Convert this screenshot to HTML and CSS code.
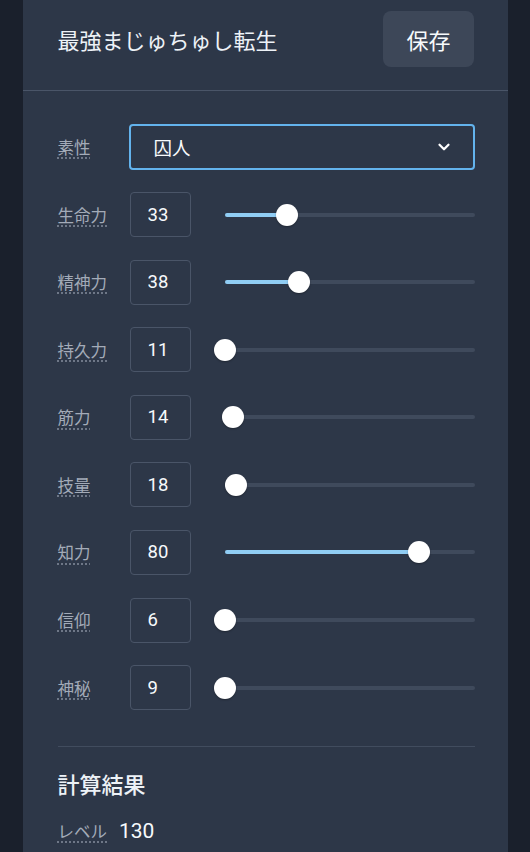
FILE: index.html
```html
<!DOCTYPE html>
<html lang="ja">
<head>
  <meta charset="UTF-8">
  <title>最強まじゅちゅし転生</title>
  <link rel="stylesheet" href="styles.css">
</head>
<body>

  <div class="panel">
    <div class="header">
      <h1 class="title">最強まじゅちゅし転生</h1>
      <button type="button" class="save-btn">保存</button>
    </div>

    <div class="content">
      <div class="field-row">
        <abbr class="label" title="素性">素性</abbr>
        <div class="select-box">
          <span>囚人</span>
          <svg class="chevron" viewBox="0 0 24 24" width="18" height="18">
            <path d="M6 9l6 6 6-6" fill="none" stroke="#fff" stroke-width="3" stroke-linecap="round" stroke-linejoin="round"/>
          </svg>
        </div>
      </div>

      <div id="stats" class="stats"></div>

      <hr class="divider">

      <h2 class="result-title">計算結果</h2>
      <div class="result-row">
        <abbr class="label" title="レベル">レベル</abbr>
        <span class="result-value">130</span>
      </div>
    </div>
  </div>

  <script>
    // 囚人 の初期値 → 最大 99
    const stats = [
      { name: '生命力', value: 33, min: 11 },
      { name: '精神力', value: 38, min: 12 },
      { name: '持久力', value: 11, min: 11 },
      { name: '筋力', value: 14, min: 11 },
      { name: '技量', value: 18, min: 14 },
      { name: '知力', value: 80, min: 14 },
      { name: '信仰', value: 6, min: 6 },
      { name: '神秘', value: 9, min: 9 }
    ];

    const list = document.getElementById('stats');
    for (const s of stats) {
      const pct = ((s.value - s.min) / (99 - s.min) * 100).toFixed(2);
      const row = document.createElement('div');
      row.className = 'stat-row';
      row.innerHTML = `
        <abbr class="label" title="${s.name}">${s.name}</abbr>
        <input class="num-input" type="text" value="${s.value}">
        <div class="slider">
          <div class="track"><div class="fill" style="width: ${pct}%"></div></div>
          <div class="thumb" style="left: ${pct}%"></div>
        </div>
      `;
      list.appendChild(row);
    }
  </script>

</body>
</html>
```

FILE: styles.css
```css
html, body {
  height: 100%;
}

body {
  margin: 0;
  background: #1a202c;
  font-family: Roboto, "Noto Sans CJK JP", sans-serif;
  color: #e2e8f0;
  overflow: hidden;
}

.panel {
  width: 485px;
  min-height: 100%;
  margin: 0 auto;
  background: #2d3748;
}

.header {
  display: flex;
  align-items: center;
  justify-content: space-between;
  padding: 11px 34px 23px 35px;
  border-bottom: 1px solid #4a5568;
}

.title {
  margin: 0;
  font-size: 22px;
  font-weight: 400;
  color: #edf2f7;
}

.save-btn {
  height: 56px;
  padding: 0 23px;
  border: none;
  border-radius: 8px;
  background: #3d4758;
  color: #f7fafc;
  font-family: inherit;
  font-size: 22px;
  font-weight: 400;
}

.content {
  padding: 33px 33px 0 35px;
}

.label {
  color: #a3abb8;
  font-size: 16.5px;
  text-decoration: underline dotted #7d8695;
  text-underline-offset: 4px;
}

.field-row {
  display: grid;
  grid-template-columns: 71px 1fr;
  align-items: center;
}

.select-box {
  display: flex;
  align-items: center;
  justify-content: space-between;
  height: 46px;
  box-sizing: border-box;
  padding: 0 20px 0 23px;
  border: 2px solid #63b3ed;
  border-radius: 4px;
  font-size: 18.5px;
  color: #f7fafc;
}

.stats {
  display: grid;
  gap: 22.6px;
  margin-top: 22px;
}

.stat-row {
  display: grid;
  grid-template-columns: 72px 61px 1fr;
  align-items: center;
}

.num-input {
  width: 61px;
  height: 45px;
  box-sizing: border-box;
  padding: 0 0 0 17px;
  border: 1px solid #4a5568;
  border-radius: 4px;
  background: transparent;
  color: #f7fafc;
  font-family: inherit;
  font-size: 18.5px;
}

.slider {
  position: relative;
  width: 250px;
  height: 22px;
  margin-left: 34px;
  display: flex;
  align-items: center;
}

.track {
  width: 100%;
  height: 4px;
  border-radius: 2px;
  background: #3f4a5c;
  overflow: hidden;
}

.fill {
  height: 100%;
  background: #90cdf4;
}

.thumb {
  position: absolute;
  top: 0;
  width: 22px;
  height: 22px;
  border-radius: 50%;
  background: #fff;
  transform: translateX(-50%);
  box-shadow: 0 1px 2px rgba(0,0,0,0.3);
}

.divider {
  margin: 36px 0 0;
  border: none;
  border-top: 1px solid #414c5e;
}

.result-title {
  margin: 24px 0 0;
  font-size: 22px;
  font-weight: 500;
  line-height: 30px;
  color: #edf2f7;
}

.result-row {
  display: flex;
  align-items: baseline;
  gap: 12px;
  margin-top: 18px;
}

.result-value {
  font-size: 21px;
  color: #f7fafc;
}
```
